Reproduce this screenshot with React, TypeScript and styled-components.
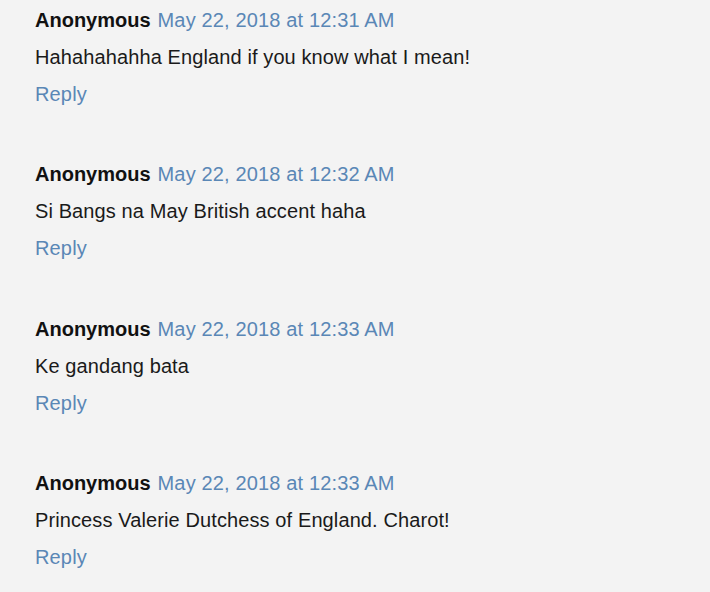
import React from "react";
import styled, { createGlobalStyle } from "styled-components";

const Global = createGlobalStyle`
  html, body { margin: 0; padding: 0; background: #f3f3f3; }
  body { font-family: "Liberation Sans", Arial, sans-serif; }
`;

const Page = styled.div`
  background: #f3f3f3;
  min-height: 592px;
  padding: 2px 0 0 35px;
  box-sizing: border-box;
`;

const Comment = styled.div`
  display: flex;
  flex-direction: column;
  margin-bottom: 43.4px;
  font-size: 20px;
  line-height: 37px;
`;

const Header = styled.div`
  display: flex;
  gap: 7px;
  white-space: nowrap;
`;

const Author = styled.span`
  font-weight: bold;
  color: #111;
`;

const Link = styled.a`
  color: #5a87b6;
  text-decoration: none;
  cursor: pointer;
  letter-spacing: 0.15px;
`;

const Body = styled.div`
  color: #1a1a1a;
  letter-spacing: 0.11px;
`;

const comments = [
  { time: "May 22, 2018 at 12:31 AM", text: "Hahahahahha England if you know what I mean!" },
  { time: "May 22, 2018 at 12:32 AM", text: "Si Bangs na May British accent haha" },
  { time: "May 22, 2018 at 12:33 AM", text: "Ke gandang bata" },
  { time: "May 22, 2018 at 12:33 AM", text: "Princess Valerie Dutchess of England. Charot!" },
];

export default function App() {
  return (
    <>
      <Global />
      <Page>
        {comments.map((c, i) => (
          <Comment key={i}>
            <Header>
              <Author>Anonymous</Author>
              <Link>{c.time}</Link>
            </Header>
            <Body>{c.text}</Body>
            <div>
              <Link>Reply</Link>
            </div>
          </Comment>
        ))}
      </Page>
    </>
  );
}
